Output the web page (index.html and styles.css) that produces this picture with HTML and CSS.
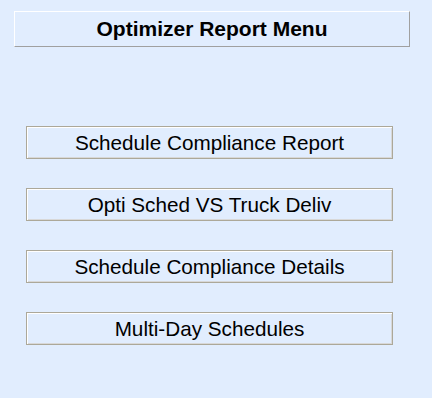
FILE: index.html
```html
<!DOCTYPE html>
<html lang="en">
<head>
    <meta charset="UTF-8">
    <meta name="viewport" content="width=device-width, initial-scale=1.0">
    <title>Optimizer Report Menu</title>
    <link rel="stylesheet" href="styles.css">
</head>
<body>

<div class="menu-title">Optimizer Report Menu</div>

<div class="menu-list">
    <button class="menu-button">Schedule Compliance Report</button>
    <button class="menu-button">Opti Sched VS Truck Deliv</button>
    <button class="menu-button">Schedule Compliance Details</button>
    <button class="menu-button">Multi-Day Schedules</button>
</div>

</body>
</html>
```

FILE: styles.css
```css
body {
    font-family: "Liberation Sans", Arial, sans-serif;
    background-color: #e1edfe;
    margin: 0;
    padding: 11px 0 0 14px;
    height: 100vh;
    box-sizing: border-box;
}
.menu-title {
    width: 396px;
    height: 36px;
    box-sizing: border-box;
    border-top: 1px solid #ffffff;
    border-left: 1px solid #ffffff;
    border-right: 1px solid #a0a0a0;
    border-bottom: 1px solid #a0a0a0;
    font-size: 21px;
    font-weight: bold;
    text-align: center;
    line-height: 34px;
    color: #000;
}
.menu-list {
    display: flex;
    flex-direction: column;
    gap: 29px;
    margin-top: 79px;
    margin-left: 12px;
}
.menu-button {
    width: 367px;
    height: 33px;
    padding: 0;
    background-color: #e1edfe;
    border: 1px solid #aca899;
    box-shadow: inset 1px 1px #ffffff, inset -1px -1px #d8d8d8;
    font-family: "Liberation Sans", Arial, sans-serif;
    font-size: 20.7px;
    color: #000;
    cursor: pointer;
}
```
